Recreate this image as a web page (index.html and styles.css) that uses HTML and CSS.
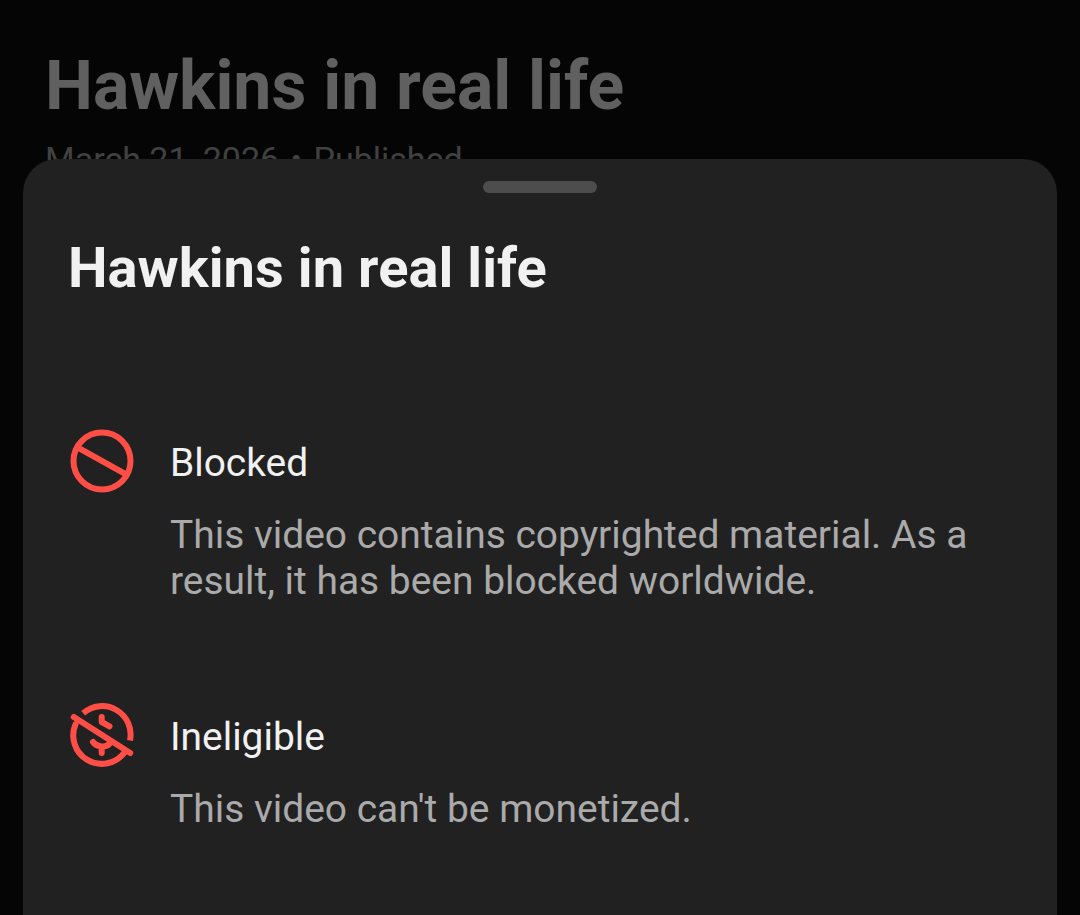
FILE: index.html
```html
<!DOCTYPE html>
<html lang="en">
<head>
  <meta charset="UTF-8" />
  <meta name="viewport" content="width=device-width, initial-scale=1.0"/>
  <title>Hawkins in real life</title>
  <link rel="stylesheet" href="styles.css">
</head>
<body>

  <!-- Video page behind the sheet -->
  <header class="page-header">
    <h1>Hawkins in real life</h1>
    <p>March 21, 2026 <span class="dot">•</span> Published</p>
  </header>

  <!-- Bottom sheet -->
  <main class="sheet">
    <div class="handle"></div>
    <h2>Hawkins in real life</h2>

    <section class="notice">
      <svg class="icon" viewBox="0 0 64 64">
        <circle cx="32" cy="32" r="28.5"/>
        <path d="M7.5 18.3L56.5 45.7"/>
      </svg>
      <div class="notice-text">
        <h3>Blocked</h3>
        <p>This video contains copyrighted material. As a<br>result, it has been blocked worldwide.</p>
      </div>
    </section>

    <section class="notice">
      <svg class="icon icon-round" viewBox="0 0 64 64">
        <path stroke-linecap="butt" d="M13.2 10.3A28.5 28.5 0 0 1 60 37.5"/>
        <path d="M5.6 21A28.5 28.5 0 0 0 54.5 49.5"/>
        <path d="M3.8 14L60.2 50"/>
        <path d="M31.7 14V19L39.5 23.3"/>
        <path d="M23 39C26 43.5 36 46 40.5 39.5M31.7 44V50"/>
      </svg>
      <div class="notice-text">
        <h3>Ineligible</h3>
        <p>This video can't be monetized.</p>
      </div>
    </section>
  </main>

</body>
</html>
```

FILE: styles.css
```css
* { box-sizing: border-box; }
body {
  margin: 0;
  height: 915px;
  display: flex;
  flex-direction: column;
  overflow: hidden;
  background: #050505;
  color: #f1f1f1;
  font-family: Roboto, sans-serif;
}
h1, h2, h3, p {
  margin: 0;
}

.page-header {
  height: 159px;
  padding: 46px 45px 0;
  flex-shrink: 0;
  white-space: nowrap;
  color: #606060;
}
.page-header h1 {
  font-size: 67.9px;
  line-height: 80px;
  font-weight: 700;
}
.page-header p {
  margin-top: 15px;
  font-size: 34px;
  line-height: 36px;
  color: #414141;
}
.dot {
  margin: 0 3px;
}

/* covers the lower half of the date line */
.sheet {
  position: relative;
  flex: 1;
  margin: 0 23px;
  padding: 22px 45px 0;
  border-radius: 34px 34px 0 0;
  background: #212121;
}
.handle {
  width: 114px;
  height: 12px;
  margin: 0 auto;
  border-radius: 6px;
  background: #4d4d4d;
}
.sheet h2 {
  margin-top: 41px;
  font-size: 56px;
  line-height: 68px;
  letter-spacing: 0.05px;
  font-weight: 700;
}

.notice {
  display: flex;
  gap: 36px;
  margin-top: 94px;
  padding-left: 2px;
}
.notice + .notice {
  margin-top: 66px;
}
.icon {
  width: 64px;
  height: 64px;
  flex-shrink: 0;
  margin-top: 33px;
  fill: none;
  stroke: #ff4e45;
  stroke-width: 6;
}
.icon-round {
  stroke-linecap: round;
  stroke-linejoin: round;
}
.notice-text {
  padding-top: 44px;
  white-space: nowrap;
}
.notice h3 {
  font-size: 38.9px;
  line-height: 46px;
  font-weight: 400;
}
.notice p {
  margin-top: 26px;
  font-size: 38.95px;
  line-height: 46px;
  color: #aaa;
}
```
